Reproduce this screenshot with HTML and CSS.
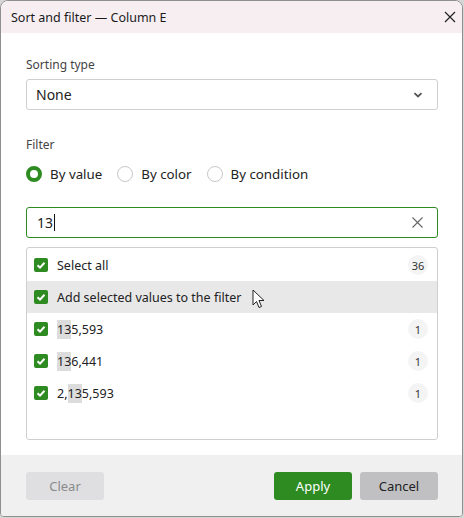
FILE: index.html
```html
<!DOCTYPE html>
<html lang="en">
<head>
    <meta charset="UTF-8">
    <title>Sort and filter</title>
    <link rel="stylesheet" href="styles.css">
</head>
<body>
    <div class="window">
        <div class="titlebar">
            <span class="title">Sort and filter — Column E</span>
            <svg class="close" width="12" height="12" viewBox="0 0 12 12"><path d="M1 1L11 11M11 1L1 11" stroke="#222" stroke-width="1.2"/></svg>
        </div>

        <div class="content">
            <div class="label">Sorting type</div>
            <div class="select">
                <span>None</span>
                <svg width="10" height="6" viewBox="0 0 10 6"><path d="M1.5 1.2L5 4.5L8.5 1.2" fill="none" stroke="#555" stroke-width="1.8"/></svg>
            </div>

            <div class="label filter-label">Filter</div>
            <div class="radios">
                <label class="radio"><span class="dot checked"></span>By value</label>
                <label class="radio"><span class="dot"></span>By color</label>
                <label class="radio"><span class="dot"></span>By condition</label>
            </div>

            <div class="search">
                <span class="query">13<span class="caret"></span></span>
                <svg width="11" height="11" viewBox="0 0 11 11"><path d="M0.5 0.5L10.5 10.5M10.5 0.5L0.5 10.5" stroke="#666" stroke-width="1.1"/></svg>
            </div>

            <div class="list">
                <div class="row">
                    <span class="check"></span>
                    <span class="text">Select all</span>
                    <span class="count">36</span>
                </div>
                <div class="row hover">
                    <span class="check"></span>
                    <span class="text">Add selected values to the filter</span>
                    <svg class="cursor" width="14" height="20" viewBox="0 0 14 20"><path d="M1 1V16L4.5 12.5L7 18.5L9.5 17.5L7 11.5H12Z" fill="#fff" stroke="#222" stroke-width="1" stroke-linejoin="round"/></svg>
                </div>
                <div class="row">
                    <span class="check"></span>
                    <span class="text"><mark>13</mark>5,593</span>
                    <span class="count">1</span>
                </div>
                <div class="row">
                    <span class="check"></span>
                    <span class="text"><mark>13</mark>6,441</span>
                    <span class="count">1</span>
                </div>
                <div class="row">
                    <span class="check"></span>
                    <span class="text">2,<mark>13</mark>5,593</span>
                    <span class="count">1</span>
                </div>
            </div>
        </div>

        <div class="footer">
            <button class="btn clear">Clear</button>
            <div class="spacer"></div>
            <button class="btn apply">Apply</button>
            <button class="btn cancel">Cancel</button>
        </div>
    </div>
</body>
</html>
```

FILE: styles.css
```css
body {
    margin: 0;
    background: #d6d6d6;
    font-family: 'Noto Sans', 'Open Sans', sans-serif;
    color: #222;
}
.window {
    width: 461px;
    height: 515px;
    background: #ffffff;
    border: 1px solid #8f8f8f;
    border-radius: 8px 8px 4px 4px;
    overflow: hidden;
    display: flex;
    flex-direction: column;
}
.titlebar {
    height: 32px;
    background: #f7eef2;
    display: flex;
    align-items: center;
    justify-content: space-between;
    padding: 0 6px 0 10px;
    flex-shrink: 0;
}
.title {
    font-size: 12.5px;
    color: #1a1a1a;
}
.content {
    flex: 1;
    padding: 22px 24px 0 25px;
}
.label {
    font-size: 12px;
    color: #444;
    height: 20px;
    line-height: 20px;
    margin-bottom: 4px;
}
.select {
    height: 29px;
    border: 1px solid #cfcfcf;
    border-radius: 3px;
    display: flex;
    align-items: center;
    justify-content: space-between;
    padding: 0 14px 0 9px;
    font-size: 14px;
}
.filter-label {
    margin-top: 25px;
    margin-bottom: 8px;
}
.radios {
    display: flex;
    gap: 15px;
    height: 22px;
    align-items: center;
    font-size: 13.3px;
}
.radio {
    display: flex;
    align-items: center;
    gap: 8px;
}
.dot {
    border: 1px solid #c8c8c8;
    border-radius: 50%;
    box-sizing: border-box;
    width: 16px;
    height: 16px;
}
.dot.checked {
    border: 4.5px solid #2e8b22;
}
.search {
    margin-top: 22px;
    height: 29px;
    border: 1px solid #2e8b22;
    border-radius: 3px;
    display: flex;
    align-items: center;
    justify-content: space-between;
    padding: 0 14px 0 10px;
    font-size: 14px;
}
.caret {
    display: inline-block;
    width: 1px;
    height: 17px;
    background: #111;
    vertical-align: -3px;
    margin-left: 1px;
}
.list {
    margin-top: 9px;
    height: 190px;
    border: 1px solid #cfcfcf;
    border-radius: 3px;
    padding-top: 1px;
}
.row {
    height: 32px;
    display: flex;
    align-items: center;
    padding: 0 9px 0 7px;
    font-size: 12.5px;
    position: relative;
}
.row.hover {
    background: #e8e8e8;
}
.check {
    width: 14px;
    height: 14px;
    border-radius: 2px;
    background: #2e8b22 url("data:image/svg+xml,%3Csvg xmlns='http://www.w3.org/2000/svg' width='14' height='14' viewBox='0 0 14 14'%3E%3Cpath d='M3.5 7.2L6 9.6L10.5 4.8' fill='none' stroke='white' stroke-width='2'/%3E%3C/svg%3E") no-repeat center;
    margin-right: 9px;
}
.text {
    flex: 1;
}
mark {
    background: #dcdcdc;
    color: inherit;
    padding: 1px 0;
}
.count {
    width: 20px;
    height: 20px;
    border-radius: 50%;
    background: #f4f4f4;
    font-size: 11px;
    display: flex;
    align-items: center;
    justify-content: center;
    color: #333;
}
.cursor {
    position: absolute;
    left: 225px;
    top: 8px;
}
.footer {
    height: 61px;
    background: #f0f0f0;
    display: flex;
    align-items: center;
    padding: 0 24px 0 25px;
    gap: 8px;
    flex-shrink: 0;
}
.spacer {
    flex: 1;
}
.btn {
    width: 78px;
    height: 28px;
    border: none;
    border-radius: 3px;
    font-family: inherit;
    font-size: 13px;
}
.clear {
    background: #dfdfe1;
    color: #8a8a8a;
}
.apply {
    background: #2e8b22;
    color: #ffffff;
}
.cancel {
    background: #c0c0c2;
    color: #222;
}
```
